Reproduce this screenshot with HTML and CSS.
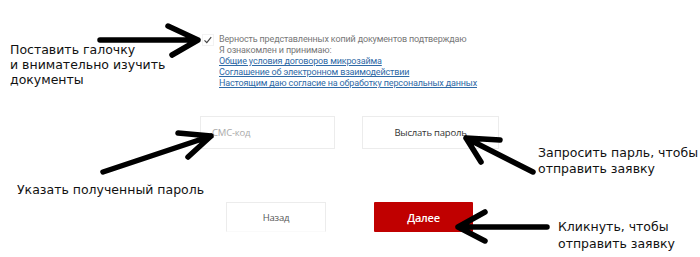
FILE: index.html
```html
<!DOCTYPE html>
<html lang="ru">
<head>
<meta charset="utf-8">
<link rel="stylesheet" href="styles.css">
</head>
<body>
<div class="page">
  <form class="form">
    <div class="consent">
      <span class="checkbox"><svg width="12" height="12" viewBox="0 0 12 12"><path d="M2.5 6.3 L4.8 8.6 L9.2 3.2" fill="none" stroke="#444" stroke-width="1.2"/></svg></span>
      <div class="consent-text">
        <div class="line">Верность представленных копий документов подтверждаю</div>
        <div class="line">Я ознакомлен и принимаю:</div>
        <a class="line" href="#">Общие условия договоров микрозайма</a>
        <a class="line" href="#">Соглашение об электронном взаимодействии</a>
        <a class="line" href="#">Настоящим даю согласие на обработку персональных данных</a>
      </div>
    </div>
    <div class="fields">
      <div class="input"><span class="placeholder">СМС-код</span></div>
      <div class="btn btn-light">Выслать пароль</div>
    </div>
    <div class="actions">
      <div class="btn btn-back">Назад</div>
      <div class="btn btn-next">Далее</div>
    </div>
  </form>

  <div class="note note-1">Поставить галочку<br>и внимательно изучить<br>документы</div>
  <div class="note note-2">Указать полученный пароль</div>
  <div class="note note-3">Запросить парль, чтобы<br>отправить заявку</div>
  <div class="note note-4">Кликнуть, чтобы<br>отправить заявку</div>

  <svg class="arrows" width="700" height="257" viewBox="0 0 700 257">
    <g stroke="#000" stroke-width="5.5" fill="none" stroke-linecap="round" stroke-linejoin="round">
      <path d="M100 40 L198 40 M168 26 L198 40 L172 55"/>
      <path d="M103 172 L211 136 M178 133 L211 136 L188 157"/>
      <path d="M533 172 L466 138 M500 140 L466 138 L481 162"/>
      <path d="M547 227 L458 227 M485 212 L458 227 L485 241"/>
    </g>
  </svg>
</div>
</body>
</html>
```

FILE: styles.css
```css
html, body {
  margin: 0;
  padding: 0;
  background: #fff;
}

.page {
  position: relative;
  width: 700px;
  height: 257px;
  overflow: hidden;
  font-family: "Open Sans", "Noto Sans", sans-serif;
}

.form {
  display: flex;
  flex-direction: column;
  padding-left: 200px;
  padding-top: 34px;
}

.consent {
  display: flex;
  gap: 5px;
  align-items: flex-start;
}

.checkbox {
  display: block;
  width: 12px;
  height: 12px;
  margin-left: 2px;
  border: 1px solid #f2f2f2;
  box-sizing: border-box;
}

.checkbox svg {
  display: block;
  margin: -1px;
}

.consent-text {
  display: flex;
  flex-direction: column;
  font-family: Roboto, "Open Sans", sans-serif;
  font-size: 9px;
  color: #777;
  letter-spacing: -0.15px;
}

.line {
  display: block;
  height: 11px;
  line-height: 11px;
  white-space: nowrap;
}

.consent-text a {
  color: #2f6aa6;
  text-decoration: underline;
}

.fields {
  display: flex;
  gap: 27px;
  margin-top: 27px;
}

.input {
  width: 135px;
  height: 33px;
  border: 1px solid #ececec;
  box-sizing: border-box;
  display: flex;
  align-items: center;
  padding-left: 11px;
}

.placeholder {
  font-size: 9.5px;
  color: #aaa;
  letter-spacing: -0.2px;
}

.btn {
  display: flex;
  align-items: center;
  justify-content: center;
  box-sizing: border-box;
  font-size: 9.5px;
  letter-spacing: -0.2px;
}

.btn-light {
  width: 137px;
  height: 33px;
  border: 1px solid #ececec;
  color: #333;
}

.actions {
  display: flex;
  gap: 48px;
  margin-top: 53px;
  padding-left: 26px;
}

.btn-back {
  width: 100px;
  height: 30px;
  border: 1px solid #ececec;
  border-bottom-color: #fafafa;
  color: #555;
}

.btn-next {
  width: 99px;
  height: 30px;
  background: #c00000;
  border-radius: 1px;
  color: #fff;
  font-size: 11px;
  font-weight: 600;
}

.note {
  position: absolute;
  font-family: "DejaVu Sans", Verdana, sans-serif;
  font-size: 12.5px;
  line-height: 15px;
  color: #111;
}

.note-1 { left: 10px; top: 42px; }
.note-2 { left: 17px; top: 182px; }
.note-3 { left: 538px; top: 145px; line-height: 16px; }
.note-4 { left: 558px; top: 218px; line-height: 17px; }

.arrows {
  position: absolute;
  left: 0;
  top: 0;
  pointer-events: none;
}
```
